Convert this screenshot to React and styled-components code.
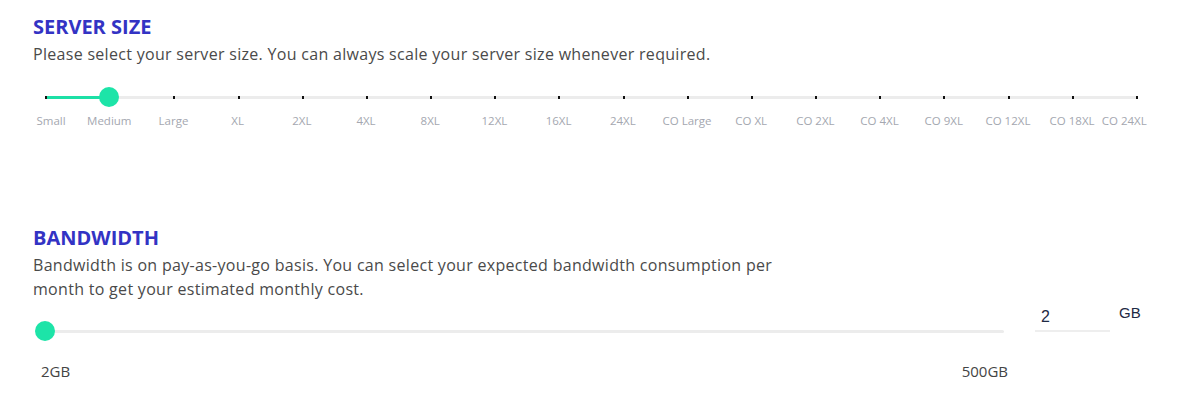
import React from 'react'
import styled, { createGlobalStyle } from 'styled-components'

const Global = createGlobalStyle`
  body {
    margin: 0;
    background: #fff;
    font-family: "Open Sans", Lato, sans-serif;
  }
`

const Page = styled.div`
  width: 1188px;
  padding: 13px 0 0 33px;
  box-sizing: border-box;
`

const Section = styled.section`
  margin-bottom: ${p => p.gap || 0}px;
`

const Title = styled.h2`
  margin: 0;
  font-size: 20px;
  line-height: 27px;
  font-weight: 700;
  color: #3333c4;
`

const Desc = styled.p`
  margin: 2px 0 0;
  width: ${p => p.width || 'auto'};
  font-size: 16px;
  letter-spacing: 0.3px;
  line-height: 24px;
  color: #4a4a4a;
`

const SizeSlider = styled.div`
  margin: 21px 0 0 12px;
  width: 1093px;
  position: relative;
`

const Track = styled.div`
  position: relative;
  height: 20px;
  display: flex;
  align-items: center;
  &::before {
    content: '';
    position: absolute;
    left: 0;
    right: 0;
    height: 3px;
    background: #ececec;
    border-radius: 2px;
  }
`

const Fill = styled.div`
  position: absolute;
  left: 0;
  height: 3px;
  background: #1de0a6;
`

const Ticks = styled.div`
  position: absolute;
  left: 0;
  right: 0;
  display: flex;
  justify-content: space-between;
`

const Tick = styled.span`
  width: 2px;
  height: 3px;
  background: #111;
`

const Thumb = styled.div`
  position: absolute;
  top: 0;
  width: 20px;
  height: 20px;
  margin-left: -10px;
  border-radius: 50%;
  background: #1de4a8;
`

const Labels = styled.div`
  display: grid;
  grid-template-columns: repeat(18, 64.2px);
  margin: 6px 0 0 -32px;
`

const Label = styled.span`
  text-align: center;
  font-size: 11.5px;
  color: #a4a7b0;
  white-space: nowrap;
  transform: translateX(${p => p.shift || 0}px);
`

const BandRow = styled.div`
  display: flex;
  align-items: flex-start;
  margin-top: 20px;
`

const BandSlider = styled.div`
  width: 959px;
  margin-left: 12px;
`

const Ends = styled.div`
  display: flex;
  justify-content: space-between;
  margin: 20px 0 0 -4px;
  width: 967px;
  font-size: 15px;
  color: #444;
`

const InputWrap = styled.div`
  display: flex;
  align-items: flex-start;
  margin: -15px 0 0 31px;
`

const Amount = styled.input`
  width: 69px;
  border: none;
  border-bottom: 2px solid #eeeeee;
  font-family: "Liberation Sans", Arial, sans-serif;
  font-size: 16px;
  color: #1e2a44;
  padding: 2px 0 4px 6px;
  outline: none;
`

const Unit = styled.span`
  margin: -2px 0 0 9px;
  font-family: "Liberation Sans", Arial, sans-serif;
  font-size: 15px;
  color: #1e2a44;
`

const sizes = ['Small', 'Medium', 'Large', 'XL', '2XL', '4XL', '8XL', '12XL', '16XL', '24XL', 'CO Large', 'CO XL', 'CO 2XL', 'CO 4XL', 'CO 9XL', 'CO 12XL', 'CO 18XL', 'CO 24XL']
const shifts = { 0: 6, 17: -12 }

export default function App() {
  const selected = 1
  const pct = (selected / (sizes.length - 1)) * 100
  return (
    <Page>
      <Global />
      <Section gap={96}>
        <Title>SERVER SIZE</Title>
        <Desc>Please select your server size. You can always scale your server size whenever required.</Desc>
        <SizeSlider>
          <Track>
            <Fill style={{ width: pct + '%' }} />
            <Ticks>
              {sizes.map(s => <Tick key={s} />)}
            </Ticks>
            <Thumb style={{ left: pct + '%' }} />
          </Track>
          <Labels>
            {sizes.map((s, i) => <Label key={s} shift={shifts[i]}>{s}</Label>)}
          </Labels>
        </SizeSlider>
      </Section>
      <Section>
        <Title>BANDWIDTH</Title>
        <Desc width="760px">Bandwidth is on pay-as-you-go basis. You can select your expected bandwidth consumption per month to get your estimated monthly cost.</Desc>
        <BandRow>
          <BandSlider>
            <Track>
              <Thumb style={{ left: 0 }} />
            </Track>
            <Ends>
              <span>2GB</span>
              <span>500GB</span>
            </Ends>
          </BandSlider>
          <InputWrap>
            <Amount defaultValue="2" />
            <Unit>GB</Unit>
          </InputWrap>
        </BandRow>
      </Section>
    </Page>
  )
}
